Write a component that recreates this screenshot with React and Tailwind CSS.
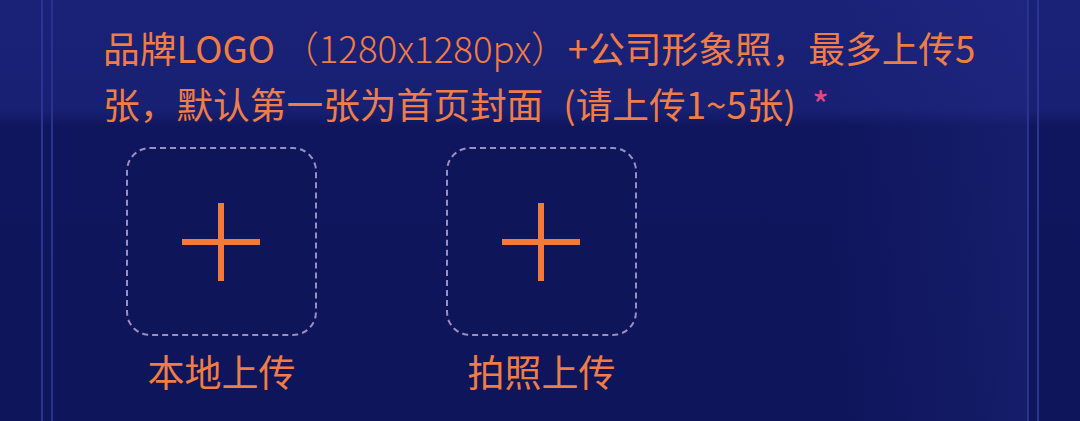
const font = { fontFamily: '"Noto Sans CJK SC", "Noto Sans", sans-serif' };

function UploadBox({ label }) {
  return (
    <div className="flex flex-col items-center w-[191px]">
      <div className="w-[191px] h-[189px] rounded-[24px] border-2 border-dashed border-[#9a8fc4] bg-[#0e1558] flex items-center justify-center">
        <svg width="80" height="80" viewBox="0 0 80 80">
          <rect x="0" y="37" width="78" height="6" fill="#f47a3a" />
          <rect x="36" y="1" width="6" height="78" fill="#f47a3a" />
        </svg>
      </div>
      <div className="mt-[12px] text-[37px] leading-[46px] text-[#f07d45]">{label}</div>
    </div>
  );
}

export default function App() {
  return (
    <div
      style={font}
      className="w-[1080px] h-[421px] overflow-hidden bg-[linear-gradient(180deg,#1a2278_0%,#182073_26%,#10165d_30%,#0f155a_100%)]"
    >
      {/* frame lines */}
      <div className="h-full ml-[41px] w-[998px] border-x-2 border-[#2a3494]">
        <div className="h-full mx-[8px] border-x-2 border-[#28328f] bg-[linear-gradient(90deg,transparent_0%,transparent_80%,rgba(40,50,150,0.25)_100%)]">
          <div className="pl-[50px] pt-[19px]">
            <p className="text-[36.7px] leading-[56px] text-[#f07d45]">
              品牌LOGO<span className="ml-[7px] font-light">（1280x1280px）</span>+公司形象照，最多上传5
              <br />
              张，默认第一张为首页封面<span className="ml-[20px]">(请上传1~5张)</span>
              <span className="ml-[16px] text-[#e4487d]">*</span>
            </p>
          </div>
          <div className="flex gap-[129px] pl-[73px] mt-[16px]">
            <UploadBox label="本地上传" />
            <UploadBox label="拍照上传" />
          </div>
        </div>
      </div>
    </div>
  );
}
